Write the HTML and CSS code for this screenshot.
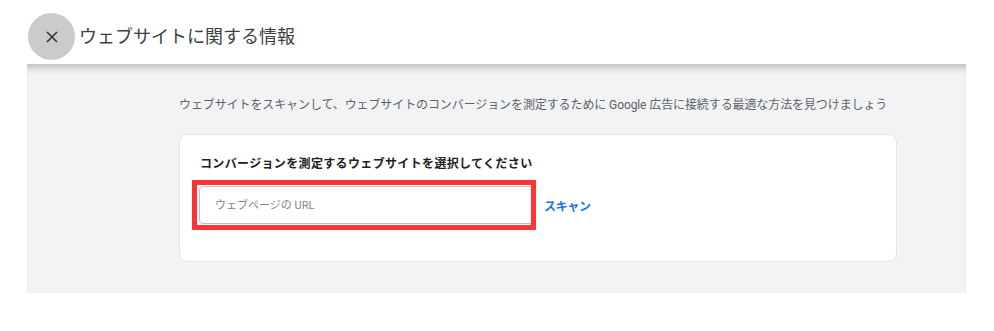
FILE: index.html
```html
<!DOCTYPE html>
<html>
<head>
    <title>ウェブサイトに関する情報</title>
    <link rel="stylesheet" href="styles.css">
</head>
<body>
    <div class="top-bar">
        <div class="close-btn">
            <svg width="12" height="12" viewBox="0 0 12 12"><path d="M1 1 L11 11 M11 1 L1 11" stroke="#333" stroke-width="1.6" fill="none"/></svg>
        </div>
        <div class="title">ウェブサイトに関する情報</div>
    </div>
    <div class="panel">
        <div class="intro">ウェブサイトをスキャンして、ウェブサイトのコンバージョンを測定するために Google 広告に接続する最適な方法を見つけましょう</div>
        <div class="card">
            <div class="card-title">コンバージョンを測定するウェブサイトを選択してください</div>
            <div class="url-row">
                <div class="url-wrap">
                    <input class="url-input" type="text" placeholder="ウェブページの URL">
                    <div class="highlight"></div>
                </div>
                <span class="scan">スキャン</span>
            </div>
        </div>
    </div>
</body>
</html>
```

FILE: styles.css
```css
body { font-family: Roboto, "Noto Sans CJK JP", sans-serif; margin: 0; padding: 0; background: #fff; }
.top-bar { height: 64px; display: flex; align-items: flex-start; padding: 13px 0 0 28px; box-sizing: border-box; }
.close-btn {
    width: 47px;
    height: 47px;
    border-radius: 50%;
    background: #cbcbcb;
    display: flex;
    align-items: center;
    justify-content: center;
}
.title { font-size: 18px; color: #3c4043; margin-left: 4px; line-height: 47px; }
.panel {
    margin: 0 28px 0 27px;
    height: 229px;
    background: #f1f3f4;
    box-shadow: inset 0 9px 8px -6px rgba(0, 0, 0, 0.25);
    padding: 33px 0 0 152px;
    box-sizing: border-box;
}
.intro { font-size: 12px; color: #5f6368; line-height: 16px; letter-spacing: -0.1px; }
.card {
    margin-top: 21px;
    width: 718px;
    height: 128px;
    box-sizing: border-box;
    background: #fff;
    border: 1px solid #e3e5e8;
    border-radius: 8px;
    padding: 21px 19px 0 19px;
}
.card-title { font-size: 12px; font-weight: bold; color: #202124; line-height: 16px; padding-left: 1px; letter-spacing: 0.35px; }
.url-row { display: flex; align-items: center; margin-top: 14px; }
.url-wrap { position: relative; }
.url-input {
    width: 336px;
    height: 38px;
    box-sizing: border-box;
    border: 1px solid #bdc1c6;
    border-radius: 4px;
    padding: 0 15px;
    font-family: Roboto, "Noto Sans CJK JP", sans-serif;
    font-size: 11px;
    outline: none;
    display: block;
}
.url-input::placeholder { color: #80868b; }
.highlight {
    position: absolute;
    left: -7px;
    top: -6px;
    right: -1px;
    bottom: -6px;
    border: 5px solid #ff3333;
}
.scan { font-size: 12px; font-weight: bold; color: #1a73e8; margin-left: 9px; letter-spacing: -0.3px; }
```
